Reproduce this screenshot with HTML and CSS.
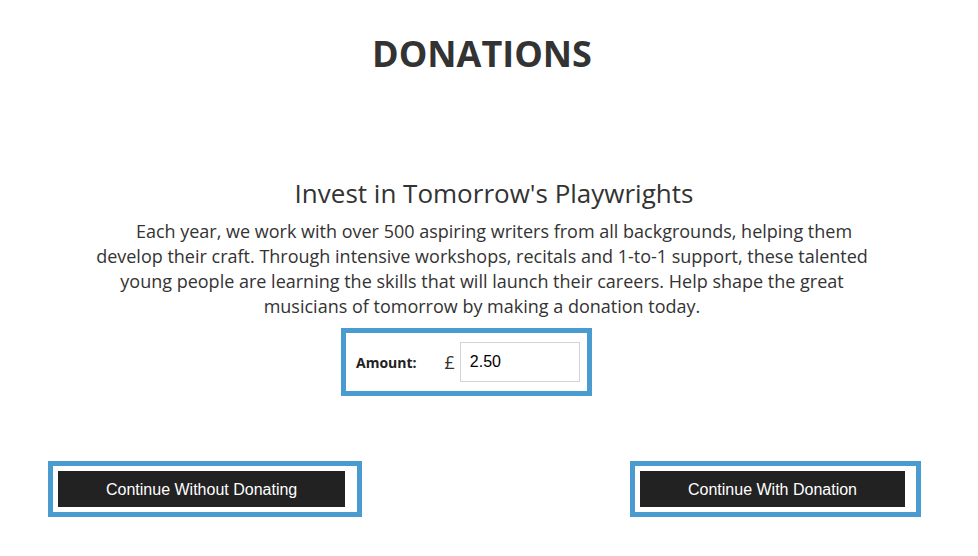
FILE: index.html
```html
<!DOCTYPE html>
<html lang="en">

<head>
    <meta charset="UTF-8" />
    <meta name="viewport" content="width=device-width, initial-scale=1.0" />
    <title>Donations</title>
    <link rel="stylesheet" href="styles.css">
</head>

<body>

<main class="donate">
    <h1 class="donate__title">DONATIONS</h1>

    <section class="donate__intro">
        <h2>Invest in Tomorrow's Playwrights</h2>
        <p>Each year, we work with over 500 aspiring writers from all backgrounds, helping them develop their craft. Through intensive workshops, recitals and 1-to-1 support, these talented young people are learning the skills that will launch their careers. Help shape the great musicians of tomorrow by making a donation today.</p>
    </section>

    <div class="donate__amount">
        <label for="amount">Amount:</label>
        <span class="donate__currency">£</span>
        <input id="amount" type="text" value="2.50" />
    </div>

    <div class="donate__actions">
        <div class="donate__btn-wrap donate__btn-wrap--skip">
            <button class="donate__btn" type="button">Continue Without Donating</button>
        </div>
        <div class="donate__btn-wrap">
            <button class="donate__btn" type="button">Continue With Donation</button>
        </div>
    </div>
</main>
</body>
</html>
```

FILE: styles.css
```css
*,
*::before,
*::after {
    box-sizing: border-box;
}

html,
body,
h1,
h2,
p {
    margin: 0;
    padding: 0;
}

body {
    font-family: 'Open Sans', sans-serif;
    color: #333;
    background: #fff;
}

.donate__title {
    margin-top: 29px;
    padding-right: 14px;
    font-size: 36px;
    line-height: 49px;
    font-weight: 700;
    text-align: center;
}

.donate__intro {
    padding-right: 14px;
    text-align: center;
}
.donate__intro h2 {
    margin-top: 98px;
    padding-left: 24px;
    font-size: 26px;
    line-height: 35px;
    font-weight: 400;
}
.donate__intro p {
    max-width: 785px;
    margin: 8px auto 0;
    font-size: 18px;
    line-height: 25px;
    text-indent: 24px;
}

.donate__amount {
    display: flex;
    align-items: center;
    width: 251px;
    margin: 9px 0 0 calc(50% - 148px);
    padding: 9px 7px 9px 10px;
    border: 5px solid #4a9bd0;
}
.donate__amount label {
    font-size: 14px;
    font-weight: 700;
    color: #222;
}
.donate__currency {
    margin-left: 28px;
    font-size: 18px;
}
.donate__amount input {
    width: 120px;
    height: 40px;
    margin-left: 5px;
    padding: 0 9px;
    border: 1px solid #d4d4d4;
    font-family: 'Liberation Sans', Arial, sans-serif;
    font-size: 16px;
    color: #000;
}

.donate__actions {
    display: flex;
    justify-content: space-between;
    margin-top: 65px;
    padding: 0 57px 0 48px;
}
.donate__btn-wrap {
    padding: 5px 11px 5px 5px;
    border: 5px solid #4a9bd0;
}
.donate__btn-wrap--skip {
    padding-right: 12px;
}
.donate__btn {
    display: block;
    height: 36px;
    padding: 2px 48px 0;
    border: none;
    background: #222;
    color: #fff;
    font-family: 'Liberation Sans', Arial, sans-serif;
    font-size: 16px;
}
```
